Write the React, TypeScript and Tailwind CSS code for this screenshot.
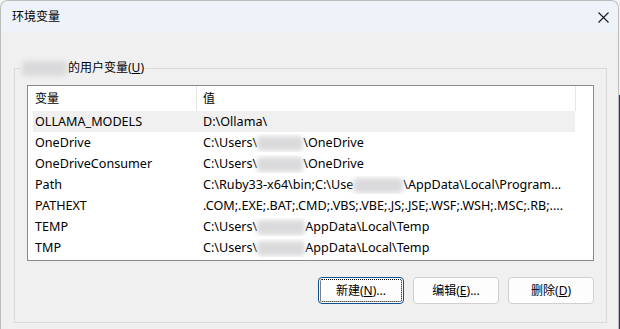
import React from 'react';

type Row = { name: string; value: React.ReactNode };

// blurred-out user name, as in the screenshot
const Blur: React.FC<{ w: string }> = ({ w }) => (
    <span className={`inline-block h-[15px] ${w} bg-[#dadadc] blur-[2.5px] align-middle rounded-sm`} />
);

const rows: Row[] = [
    { name: 'OLLAMA_MODELS', value: 'D:\\Ollama\\' },
    { name: 'OneDrive', value: <>C:\Users\<Blur w="w-[46px]" />\OneDrive</> },
    { name: 'OneDriveConsumer', value: <>C:\Users\<Blur w="w-[46px]" />\OneDrive</> },
    { name: 'Path', value: <>C:\Ruby33-x64\bin;C:\Use<Blur w="w-[50px]" />\AppData\Local\Program...</> },
    { name: 'PATHEXT', value: '.COM;.EXE;.BAT;.CMD;.VBS;.VBE;.JS;.JSE;.WSF;.WSH;.MSC;.RB;....' },
    { name: 'TEMP', value: <>C:\Users\<Blur w="w-[48px]" />AppData\Local\Temp</> },
    { name: 'TMP', value: <>C:\Users\<Blur w="w-[48px]" />AppData\Local\Temp</> },
];

const DialogButton: React.FC<{ label: string; hot: string; tail: string; focused?: boolean }> = ({ label, hot, tail, focused }) => (
    <button
        className={`w-[86px] h-[27px] rounded-[4px] bg-[#fdfdfd] text-[12px] text-black flex items-center justify-center border ${
            focused ? 'border-[#0f4f8f] outline-1 outline-dotted outline-black -outline-offset-[3px]' : 'border-[#d0d0d0]'
        }`}
    >
        {label}(<span className="underline">{hot}</span>){tail}
    </button>
);

export default function App() {
    return (
        <div className="flex w-[620px] h-[329px] overflow-hidden bg-[#f4f4f4] font-['Noto_Sans','Noto_Sans_CJK_SC',sans-serif] text-black">
            {/* Window */}
            <div className="w-[619px] h-[329px] flex flex-col bg-[#f0f0f0] border-l border-t border-r border-[#bcbcbc] rounded-t-[8px] overflow-hidden">
                {/* Title bar */}
                <div className="h-[31px] shrink-0 bg-[#eef2f9] flex items-center justify-between pl-[11px] pr-[9px]">
                    <span className="text-[12px] leading-none">环境变量</span>
                    <svg width="11" height="11" viewBox="0 0 11 11" className="mt-px">
                        <path d="M0.5 0.5 L10.5 10.5 M10.5 0.5 L0.5 10.5" stroke="#1a1a1a" strokeWidth="1.1" />
                    </svg>
                </div>

                {/* Body */}
                <div className="pt-[28px] pl-[13px] pr-[11px]">
                    <fieldset className="h-[263px] border border-[#dadada] pt-[9px] pl-[12px] pr-[12px] flex flex-col">
                        <legend className="-ml-[6px] px-[1px] text-[12px] leading-[16px] flex items-center">
                            <Blur w="w-[45px]" />
                            <span className="ml-[1px]">的用户变量(<span className="underline">U</span>)</span>
                        </legend>

                        {/* List view */}
                        <div className="h-[176px] border border-[#868a91] bg-white flex flex-col text-[12px]">
                            <div className="h-[25px] flex shrink-0">
                                <div className="w-[169px] border-r border-[#e5e5e5] pl-[7px] flex items-center">变量</div>
                                <div className="w-[379px] border-r border-[#e5e5e5] pl-[6px] flex items-center">值</div>
                            </div>
                            {rows.map((r, i) => (
                                <div
                                    key={r.name}
                                    className={`h-[21px] ml-[5px] w-[542px] pt-px flex items-center whitespace-nowrap text-[12.6px] ${i === 0 ? 'bg-[#f0f0f0]' : ''}`}
                                >
                                    <div className="w-[164px] pl-[2px]">{r.name}</div>
                                    <div className="pl-[6px] overflow-hidden">{r.value}</div>
                                </div>
                            ))}
                        </div>

                        {/* Buttons */}
                        <div className="mt-[16px] flex justify-end gap-[9px]">
                            <DialogButton label="新建" hot="N" tail="..." focused />
                            <DialogButton label="编辑" hot="E" tail="..." />
                            <DialogButton label="删除" hot="D" tail="" />
                        </div>
                    </fieldset>
                </div>
            </div>

            {/* Desktop sliver to the right of the window */}
            <div className="w-[1px] flex flex-col">
                <div className="h-[95px] bg-[#f4f4f4]" />
                <div className="flex-1 bg-[#1e3b6d]" />
            </div>
        </div>
    );
}
